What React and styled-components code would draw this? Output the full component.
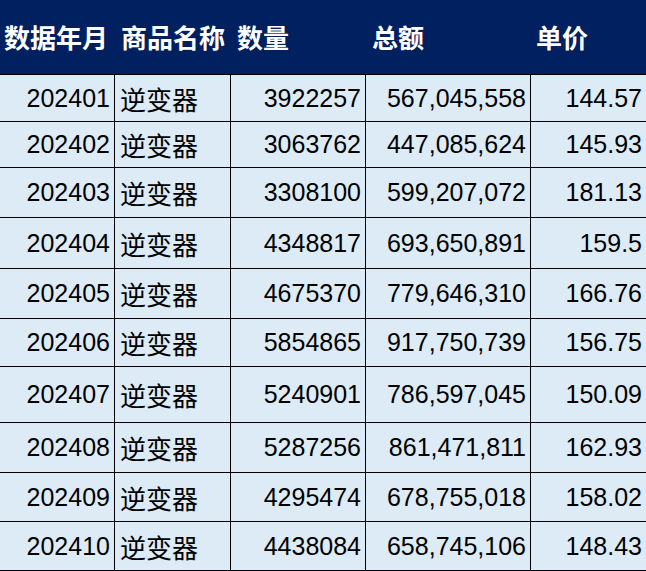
import React from "react";
import styled, { createGlobalStyle } from "styled-components";

const GlobalStyle = createGlobalStyle`
  html, body {
    margin: 0;
    padding: 0;
    background: #ffffff;
  }
  * {
    box-sizing: border-box;
  }
`;

const Sheet = styled.div`
  display: grid;
  grid-template-columns: 115px 116px 135px 165px 115px;
  width: 646px;
  font-family: "Liberation Sans", "Noto Sans CJK SC", sans-serif;
  font-size: 25px;
  color: #000000;
`;

const HeadCell = styled.div`
  display: flex;
  align-items: center;
  height: 75px;
  padding: 0 0 2px ${(props) => props.$pad}px;
  background-color: #002060;
  border-bottom: 1px solid #000000;
  color: #ffffff;
  font-family: "Noto Sans CJK SC", sans-serif;
  font-size: 26px;
  font-weight: 700;
  white-space: nowrap;
`;

const Cell = styled.div`
  display: flex;
  align-items: center;
  justify-content: ${(props) => (props.$left ? "flex-start" : "flex-end")};
  height: ${(props) => props.$h}px;
  padding: ${(props) => (props.$left ? "0 0 0 5px" : "0 4px 0 0")};
  background-color: #ddebf7;
  border-bottom: 1px solid #000000;
  border-right: ${(props) => (props.$last ? "none" : "1px solid #000000")};
  font-family: ${(props) =>
    props.$left
      ? `"Noto Sans CJK SC", sans-serif`
      : `"Liberation Sans", "Noto Sans CJK SC", sans-serif`};
  font-size: ${(props) => (props.$left ? 26 : 25)}px;
  white-space: nowrap;
`;

const headers = [
  { label: "数据年月", pad: 4 },
  { label: "商品名称", pad: 6 },
  { label: "数量", pad: 6 },
  { label: "总额", pad: 6 },
  { label: "单价", pad: 5 },
];

const rows = [
  ["202401", "3922257", "567,045,558", "144.57", 47],
  ["202402", "3063762", "447,085,624", "145.93", 46],
  ["202403", "3308100", "599,207,072", "181.13", 50],
  ["202404", "4348817", "693,650,891", "159.5", 51],
  ["202405", "4675370", "779,646,310", "166.76", 50],
  ["202406", "5854865", "917,750,739", "156.75", 48],
  ["202407", "5240901", "786,597,045", "150.09", 56],
  ["202408", "5287256", "861,471,811", "162.93", 50],
  ["202409", "4295474", "678,755,018", "158.02", 49],
  ["202410", "4438084", "658,745,106", "148.43", 49],
];

const App = () => {
  return (
    <>
      <GlobalStyle />
      <Sheet>
        {headers.map((h) => (
          <HeadCell key={h.label} $pad={h.pad}>
            {h.label}
          </HeadCell>
        ))}
        {rows.map(([month, qty, total, price, h]) => (
          <React.Fragment key={month}>
            <Cell $h={h}>{month}</Cell>
            <Cell $h={h} $left>
              逆变器
            </Cell>
            <Cell $h={h}>{qty}</Cell>
            <Cell $h={h}>{total}</Cell>
            <Cell $h={h} $last>
              {price}
            </Cell>
          </React.Fragment>
        ))}
      </Sheet>
    </>
  );
};

export default App;
